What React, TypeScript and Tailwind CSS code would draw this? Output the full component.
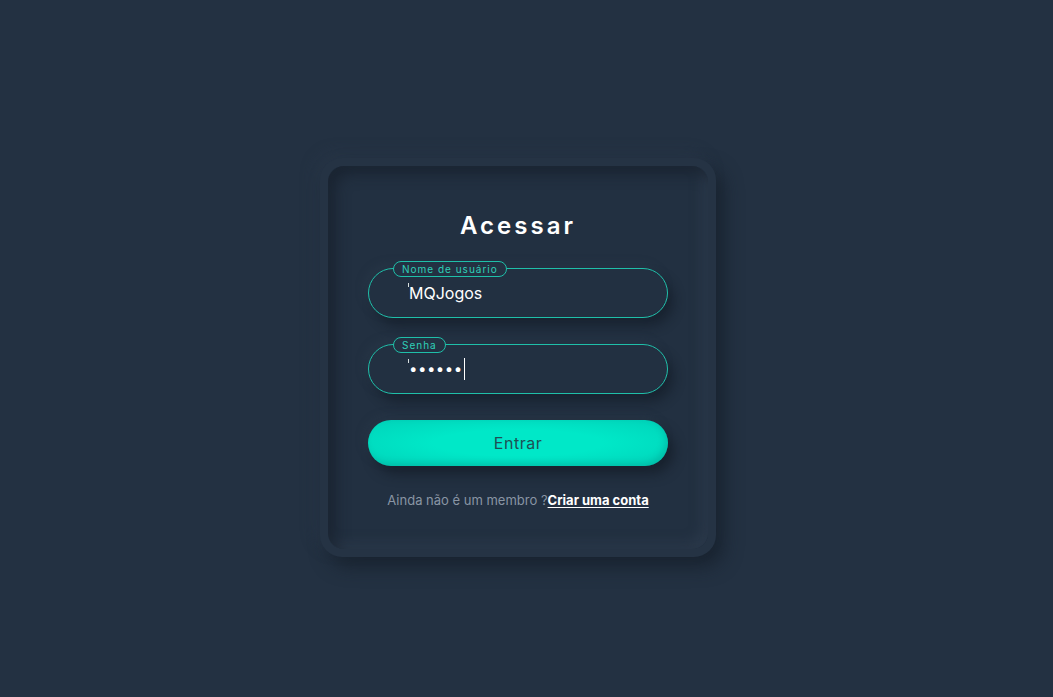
const font = { fontFamily: '"Inter", "Open Sans", sans-serif' };

const Field = ({ label, children }: { label: string; children: React.ReactNode }) => (
  <div className="relative h-[50px] w-[300px] rounded-full border border-[#1fbfa9] shadow-[6px_8px_12px_rgba(14,20,28,0.45),-4px_-4px_10px_rgba(52,66,84,0.25)]">
    <span className="absolute left-[24px] top-[-8px] rounded-full border border-[#1fbfa9] bg-[#233142] px-[8px] text-[10px] leading-[14px] tracking-[1px] text-[#2fd0b8]">
      {label}
    </span>
    <div className="relative flex h-full items-center pl-[40px] text-[16px] text-white">
      <span className="absolute left-[39px] top-[14px] h-[4px] w-px bg-[#d8e0e0]" />
      {children}
    </div>
  </div>
);

export default function App() {
  return (
    <div
      style={font}
      className="flex min-h-[697px] w-full items-start justify-center bg-[#233142] pr-[17px] pt-[158px]"
    >
      <div className="rounded-[22px] bg-[#253344] p-[8px] shadow-[8px_10px_18px_rgba(18,26,36,0.6),-6px_-6px_14px_rgba(44,58,76,0.45)]">
        <div className="flex w-[380px] flex-col items-center rounded-[16px] bg-[#223041] pb-[39px] pt-[44px] shadow-[inset_8px_8px_14px_rgba(20,28,38,0.55),inset_-6px_-6px_12px_rgba(52,66,84,0.5)]">
          <h1 className="text-[24px] font-semibold leading-[32px] tracking-[3px] text-white">
            Acessar
          </h1>
          <div className="mt-[26px] flex flex-col gap-[26px]">
            <Field label="Nome de usuário">
              <span>MQJogos</span>
            </Field>
            <Field label="Senha">
              <span className="text-[15px] tracking-[0.5px]">••••••</span>
              <span className="ml-[1px] h-[22px] w-px bg-white" />
            </Field>
            <button className="h-[46px] w-[300px] rounded-full bg-[radial-gradient(ellipse_at_center,#00e8c8_40%,#00d2b9_100%)] text-[16px] tracking-[0.5px] text-[#1f4f55] shadow-[6px_8px_12px_rgba(14,20,28,0.5),-4px_-4px_10px_rgba(52,66,84,0.25),inset_-3px_-3px_6px_rgba(0,120,110,0.25)]">
              Entrar
            </button>
          </div>
          <p className="mt-[24px] text-[13px] leading-[20px] text-[#8995a4]">
            Ainda não é um membro ?
            <a className="font-bold text-white underline underline-offset-2">Criar uma conta</a>
          </p>
        </div>
      </div>
    </div>
  );
}
